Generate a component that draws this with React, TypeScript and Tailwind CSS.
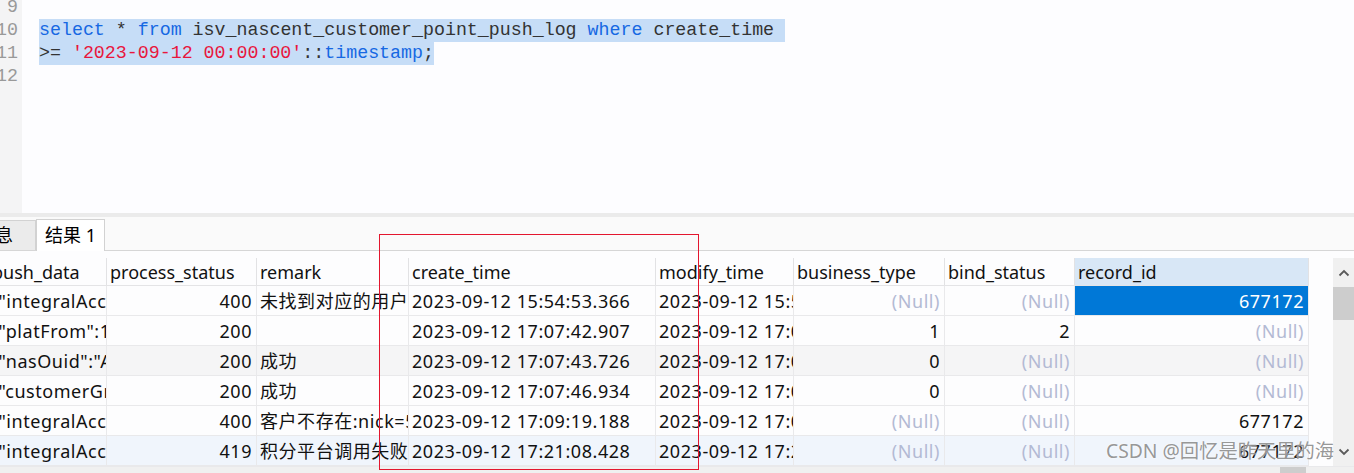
import React from "react"

const cols = [
  { name: "push_data", w: "w-[107px]", right: false },
  { name: "process_status", w: "w-[150px]", right: true },
  { name: "remark", w: "w-[152px]", right: false },
  { name: "create_time", w: "w-[247px]", right: false },
  { name: "modify_time", w: "w-[138px]", right: false },
  { name: "business_type", w: "w-[151px]", right: true },
  { name: "bind_status", w: "w-[130px]", right: true },
  { name: "record_id", w: "w-[234px]", right: true },
]

type Cell = string | null

const rows: { bg: string; cells: Cell[] }[] = [
  {
    bg: "bg-[#fdfdfe]",
    cells: ['{"integralAccountId":1', "400", "未找到对应的用户", "2023-09-12 15:54:53.366", "2023-09-12 15:54:53.366", null, null, "677172"],
  },
  {
    bg: "bg-[#fdfdfe]",
    cells: ['{"platFrom":1,"nick"', "200", "", "2023-09-12 17:07:42.907", "2023-09-12 17:07:42.907", "1", "2", null],
  },
  {
    bg: "bg-[#f5f5f6]",
    cells: ['{"nasOuid":"AAFx', "200", "成功", "2023-09-12 17:07:43.726", "2023-09-12 17:07:43.726", "0", null, null],
  },
  {
    bg: "bg-[#fdfdfe]",
    cells: ['{"customerGrade":1', "200", "成功", "2023-09-12 17:07:46.934", "2023-09-12 17:07:46.934", "0", null, null],
  },
  {
    bg: "bg-[#fdfdfe]",
    cells: ['{"integralAccountId":1', "400", "客户不存在:nick=5pyx", "2023-09-12 17:09:19.188", "2023-09-12 17:09:19.188", null, null, "677172"],
  },
  {
    bg: "bg-[#f0f5fc]",
    cells: ['{"integralAccountId":1', "419", "积分平台调用失败:errMsg", "2023-09-12 17:21:08.428", "2023-09-12 17:21:08.428", null, null, "677172"],
  },
]

const mono = "font-['Liberation_Mono','DejaVu_Sans_Mono',monospace]"
const ui = "font-['Noto_Sans','Noto_Sans_CJK_SC',sans-serif]"

const Chevron = ({ down }: { down?: boolean }) => (
  <svg width="12" height="8" viewBox="0 0 12 8" className={down ? "rotate-180" : ""}>
    <path d="M1.5 6.5 L6 2 L10.5 6.5" fill="none" stroke="#5a5a5a" strokeWidth="1.8" />
  </svg>
)

export default function App() {
  return (
    <div className={`relative w-[1354px] h-[473px] overflow-hidden bg-white ${ui}`}>
      {/* editor */}
      <div className="flex h-[213px] bg-[#fdfdff]">
        <div className={`w-[22px] shrink-0 bg-[#f4f4f5] text-[#999] ${mono} text-[18.3px] leading-[23px]`}>
          <div className="-mt-[4px] flex flex-col items-end pr-[4px]">
            <div>9</div>
            <div>10</div>
            <div>11</div>
            <div>12</div>
          </div>
        </div>
        <div className={`flex-1 pl-[17px] ${mono} text-[18.3px] leading-[23px] text-[#333] whitespace-pre`}>
          <div className="-mt-[4px]">
            <div>&nbsp;</div>
            <div>
              <span className="inline-block bg-[#c6ddf7]">
                <span className="text-[#1668e3]">select</span> * <span className="text-[#1668e3]">from</span> isv_nascent_customer_point_push_log{" "}
                <span className="text-[#1668e3]">where</span> create_time{" "}
              </span>
            </div>
            <div>
              <span className="inline-block bg-[#c6ddf7]">
                &gt;= <span className="text-[#e8173d]">'2023-09-12 00:00:00'</span>::<span className="text-[#1668e3]">timestamp</span>;
              </span>
            </div>
            <div>&nbsp;</div>
          </div>
        </div>
      </div>
      <div className="h-[4px] bg-[#ebebeb]" />

      {/* tabs */}
      <div className="relative h-[34px] bg-[#fafafa] border-b border-[#d6d6d6] flex items-end">
        <div className="h-[30px] w-[36px] bg-[#ebebeb] border-r border-t border-[#d2d2d2] flex items-center justify-end pr-[22px] text-[18px] text-black overflow-hidden">
          <span className="whitespace-nowrap">信息</span>
        </div>
        <div className="h-[32px] -mb-px w-[69px] bg-white border-x border-t border-[#d2d2d2] flex items-center pl-[8px] text-[18px] text-black">
          结果 1
        </div>
      </div>

      {/* grid */}
      <div className="h-[7px] bg-[#fdfdfe]" />
      <div className="flex h-[208px] bg-[#fdfdfe]">
        <div className="w-[1309px] shrink-0 text-[18px] text-[#111]">
          <div className="flex h-[28px] border-b border-[#e4e4e6]">
            {cols.map((c) => (
              <div
                key={c.name}
                className={`${c.w} shrink-0 border-r border-[#e2e2e4] flex items-center pt-[2px] overflow-hidden whitespace-nowrap ${
                  c.name === "record_id" ? "bg-[#d8e7f6]" : ""
                } ${c.name === "push_data" ? "pl-0" : "pl-[3px]"}`}
              >
                {c.name === "push_data" ? <span className="-ml-[8px]">push_data</span> : c.name}
              </div>
            ))}
          </div>
          {rows.map((r, i) => (
            <div key={i} className={`flex h-[30px] border-b border-[#e9e9eb] tracking-[0.55px] ${r.bg}`}>
              {r.cells.map((v, j) => {
                const c = cols[j]
                const selected = i === 0 && j === 7
                return (
                  <div
                    key={j}
                    className={`${c.w} shrink-0 border-r border-[#e9e9eb] flex items-center pt-[2px] overflow-hidden whitespace-nowrap ${
                      c.right ? "justify-end pr-[4px]" : j === 0 ? "" : "pl-[3px]"
                    } ${selected ? "bg-[#0078d7] text-white" : ""}`}
                  >
                    {j === 0 ? (
                      <span className="-ml-[9px]">{v}</span>
                    ) : v === null ? (
                      <span className="text-[#b3bad4]">(Null)</span>
                    ) : (
                      v
                    )}
                  </div>
                )
              })}
            </div>
          ))}
        </div>
        <div className="flex-1" />
        <div className="w-[21px] shrink-0 bg-[#f0f0f0] flex flex-col items-center">
          <div className="h-[29px] flex items-center justify-center">
            <Chevron />
          </div>
          <div className="w-full h-[33px] bg-[#cdcdcd]" />
          <div className="flex-1" />
          <div className="h-[28px] flex items-center justify-center">
            <Chevron down />
          </div>
        </div>
      </div>
      <div className="h-px bg-[#e9e9eb]" />
      <div className="h-[6px] bg-[#f0f0f0] flex">
        <div className="w-[1280px]" />
        <div className="w-[26px] bg-[#cdcdcd]" />
      </div>

      {/* annotation */}
      <div className="absolute left-[379px] top-[234px] w-[320px] h-[236px] border border-[#e3162e] pointer-events-none" />
      <div className="absolute left-[1106px] top-[437px] text-[19.3px] text-[#8a8a8a]/90 whitespace-nowrap [text-shadow:0_0_2px_white]">
        CSDN @回忆是昨天里的海
      </div>
    </div>
  )
}
